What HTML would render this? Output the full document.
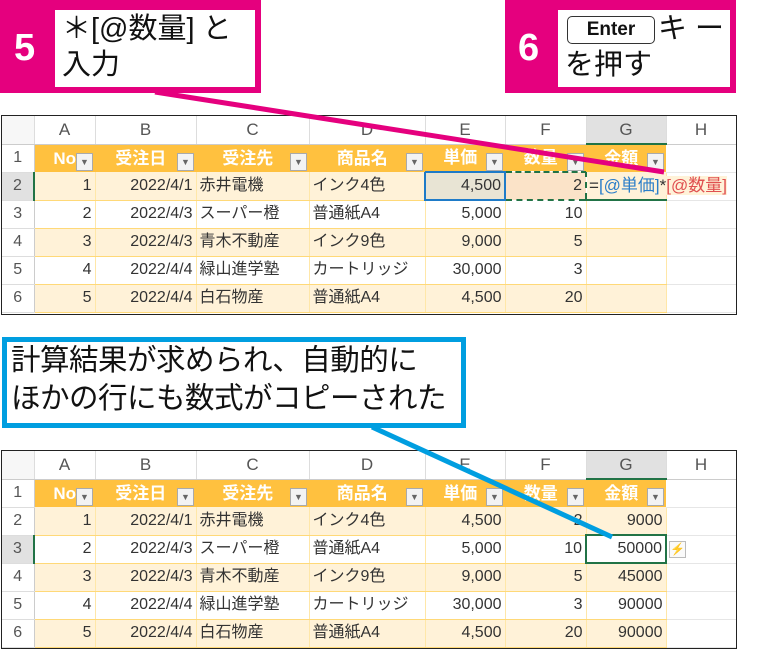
<!DOCTYPE html>
<html><head><meta charset="utf-8"><style>
*{margin:0;padding:0;box-sizing:border-box}
body{width:783px;height:649px;background:#fff;position:relative;overflow:hidden;font-family:"Liberation Sans Narrow","Liberation Sans","Noto Sans CJK JP",sans-serif}
.sheet{position:absolute;left:1px;border:1px solid #222;width:736px;background:#fff;overflow:hidden}
table{border-collapse:collapse;table-layout:fixed;width:734px}
td{height:28px;font-size:16px;line-height:1;vertical-align:middle;color:#333;white-space:nowrap;overflow:visible;border-right:1px solid #ffe7a8;border-bottom:1px solid #ffd978;padding:0 3px;font-family:"Liberation Sans Narrow","Liberation Sans","Noto Sans CJK JP",sans-serif}
tr.h td{color:#555;text-align:center;font-size:17px;border-right:1px solid #ddd;border-bottom:1px solid #ccc;background:#fff}
td.rn{color:#555;text-align:center;background:#fff;border-right:1px solid #ccc;border-bottom:1px solid #ddd}
tr.t td.c{background:#ffc13f;color:#fff;font-weight:bold;text-align:center;border:none;position:relative;font-size:17px}
tr.b td.c{background:#fff2d8}
tr.w td.c{background:#fff}
td.r{text-align:right}
td.hcol{background:#fff !important;border-right:none;border-bottom:1px solid #e6e6e6}
.fb{position:absolute;right:2px;top:8px;width:17px;height:18px;background:#f3f3f3;border:1px solid #aaa;color:#666;font-size:9px;line-height:17px;text-align:center;font-weight:normal}
.call{position:absolute;color:#111;font-family:"Liberation Sans","Noto Sans CJK JP",sans-serif}
</style></head><body>

<div style="position:absolute;left:0;top:0;width:261px;height:93px;background:#e5007e"></div>
<div style="position:absolute;left:55px;top:10px;width:200px;height:77px;background:#fff"></div>
<div class="call" style="left:14px;top:27px;color:#fff;font-size:38px;font-weight:bold">5</div>
<div class="call" style="left:62px;top:11px;font-size:29px;line-height:36px">＊[@数量] と<br>入力</div>

<div style="position:absolute;left:505px;top:0;width:231px;height:93px;background:#e5007e"></div>
<div style="position:absolute;left:558px;top:10px;width:172px;height:77px;background:#fff"></div>
<div class="call" style="left:518px;top:27px;color:#fff;font-size:38px;font-weight:bold">6</div>
<div style="position:absolute;left:567px;top:16px;width:88px;height:28px;border:1.5px solid #333;border-radius:5px;font:bold 19px 'Liberation Sans Narrow','Liberation Sans',sans-serif;text-align:center;line-height:25px;color:#111">Enter</div>
<div class="call" style="left:658px;top:11px;font-size:29px;line-height:36px">キ ー</div>
<div class="call" style="left:565px;top:47px;font-size:29px;line-height:36px">を押す</div>

<div class="sheet" style="top:115px;height:200px">
<table>
<colgroup><col style="width:32px"><col style="width:61px"><col style="width:101px"><col style="width:113px"><col style="width:116px"><col style="width:80px"><col style="width:81px"><col style="width:80px"><col style="width:70px"></colgroup>
<tr class="h"><td style="background:#f7f7f7"></td><td>A</td><td>B</td><td>C</td><td>D</td><td>E</td><td>F</td><td style="background:#e1e1e1;border-bottom:2px solid #217346">G</td><td>H</td></tr>
<tr class="t"><td class="rn">1</td><td class="c">No<span class="fb">▼</span></td><td class="c">受注日 &nbsp; <span class="fb">▼</span></td><td class="c">受注先 &nbsp; <span class="fb">▼</span></td><td class="c">商品名 &nbsp; <span class="fb">▼</span></td><td class="c">単価 &nbsp;<span class="fb">▼</span></td><td class="c">数量 &nbsp;<span class="fb">▼</span></td><td class="c">金額 &nbsp;<span class="fb">▼</span></td><td class="hcol"></td></tr>
<tr class="b"><td class="rn" style="border-right:2px solid #217346;background:#e1e1e1">2</td><td class="c r">1</td><td class="c r">2022/4/1</td><td class="c">赤井電機</td><td class="c">インク4色</td><td class="c r" style="background:#e8e4d4;border:2px solid #1e7bc8">4,500</td><td class="c r" style="background:#fbe3c8;border:2px dashed #217346">2</td><td class="c" style="border-bottom:2px solid #217346;padding:0 2px;overflow:visible;position:relative"><span style="position:absolute;left:2px;top:5px;font-size:17px"><span style="color:#333">=</span><span style="color:#2b7ec9">[@単価]</span><span style="color:#333">*</span><span style="color:#e05050;background:#fff2d8">[@数量]</span></span></td><td class="hcol"></td></tr>
<tr class="w"><td class="rn">3</td><td class="c r">2</td><td class="c r">2022/4/3</td><td class="c">スーパー橙</td><td class="c">普通紙A4</td><td class="c r">5,000</td><td class="c r">10</td><td class="c"></td><td class="hcol"></td></tr>
<tr class="b"><td class="rn">4</td><td class="c r">3</td><td class="c r">2022/4/3</td><td class="c">青木不動産</td><td class="c">インク9色</td><td class="c r">9,000</td><td class="c r">5</td><td class="c"></td><td class="hcol"></td></tr>
<tr class="w"><td class="rn">5</td><td class="c r">4</td><td class="c r">2022/4/4</td><td class="c">緑山進学塾</td><td class="c">カートリッジ</td><td class="c r">30,000</td><td class="c r">3</td><td class="c"></td><td class="hcol"></td></tr>
<tr class="b"><td class="rn">6</td><td class="c r">5</td><td class="c r">2022/4/4</td><td class="c">白石物産</td><td class="c">普通紙A4</td><td class="c r">4,500</td><td class="c r">20</td><td class="c"></td><td class="hcol"></td></tr>
</table></div>

<div style="position:absolute;left:2px;top:337px;width:464px;height:91px;border:5px solid #009ee0;background:#fff"></div>
<div class="call" style="left:11px;top:342px;font-size:29.5px;line-height:38px;letter-spacing:-0.5px">計算結果が求められ、自動的に<br>ほかの行にも数式がコピーされた</div>

<div class="sheet" style="top:450px;height:199px">
<table>
<colgroup><col style="width:32px"><col style="width:61px"><col style="width:101px"><col style="width:113px"><col style="width:116px"><col style="width:80px"><col style="width:81px"><col style="width:80px"><col style="width:70px"></colgroup>
<tr class="h"><td style="background:#f7f7f7"></td><td>A</td><td>B</td><td>C</td><td>D</td><td>E</td><td>F</td><td style="background:#e1e1e1;border-bottom:2px solid #217346">G</td><td>H</td></tr>
<tr class="t"><td class="rn">1</td><td class="c">No<span class="fb">▼</span></td><td class="c">受注日 &nbsp; <span class="fb">▼</span></td><td class="c">受注先 &nbsp; <span class="fb">▼</span></td><td class="c">商品名 &nbsp; <span class="fb">▼</span></td><td class="c">単価 &nbsp;<span class="fb">▼</span></td><td class="c">数量 &nbsp;<span class="fb">▼</span></td><td class="c">金額 &nbsp;<span class="fb">▼</span></td><td class="hcol"></td></tr>
<tr class="b"><td class="rn">2</td><td class="c r">1</td><td class="c r">2022/4/1</td><td class="c">赤井電機</td><td class="c">インク4色</td><td class="c r">4,500</td><td class="c r">2</td><td class="c r">9000</td><td class="hcol"></td></tr>
<tr class="w"><td class="rn" style="border-right:2px solid #217346;background:#e1e1e1">3</td><td class="c r">2</td><td class="c r">2022/4/3</td><td class="c">スーパー橙</td><td class="c">普通紙A4</td><td class="c r">5,000</td><td class="c r">10</td><td class="c r" style="border:2px solid #217346">50000</td><td class="hcol" style="position:relative"><span style="position:absolute;left:2px;top:5px;width:17px;height:17px;border:1px solid #bbb;background:#fafafa;color:#f08a00;font-size:12px;line-height:15px;text-align:center">⚡</span></td></tr>
<tr class="b"><td class="rn">4</td><td class="c r">3</td><td class="c r">2022/4/3</td><td class="c">青木不動産</td><td class="c">インク9色</td><td class="c r">9,000</td><td class="c r">5</td><td class="c r">45000</td><td class="hcol"></td></tr>
<tr class="w"><td class="rn">5</td><td class="c r">4</td><td class="c r">2022/4/4</td><td class="c">緑山進学塾</td><td class="c">カートリッジ</td><td class="c r">30,000</td><td class="c r">3</td><td class="c r">90000</td><td class="hcol"></td></tr>
<tr class="b"><td class="rn">6</td><td class="c r">5</td><td class="c r">2022/4/4</td><td class="c">白石物産</td><td class="c">普通紙A4</td><td class="c r">4,500</td><td class="c r">20</td><td class="c r">90000</td><td class="hcol"></td></tr>
</table></div>

<svg width="783" height="649" style="position:absolute;left:0;top:0;pointer-events:none">
<line x1="155" y1="92" x2="664" y2="172" stroke="#e5007e" stroke-width="5"/>
<line x1="372" y1="427" x2="612" y2="537" stroke="#009ee0" stroke-width="5"/>
</svg>
</body></html>
